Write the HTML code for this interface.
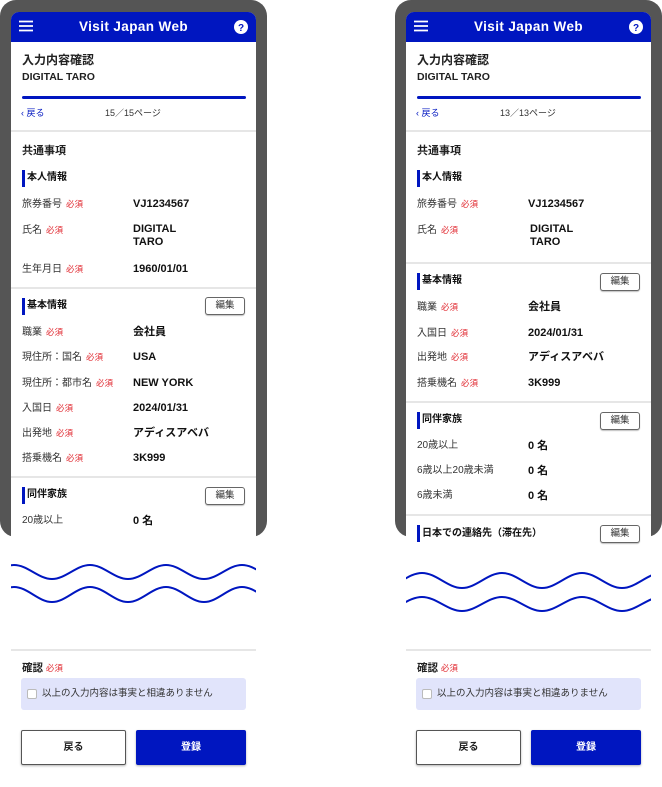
<!DOCTYPE html>
<html><head><meta charset="utf-8"><style>
*{margin:0;padding:0;box-sizing:border-box}
body{width:662px;height:787px;background:#fff;position:relative;overflow:hidden;font-family:"Liberation Sans","Noto Sans CJK JP",sans-serif;color:#222}
.ph{position:absolute;top:0;width:267px;height:787px}
.fr{position:absolute;left:0;top:0;width:267px;height:537px;background:#555;border-radius:16px}
.sc{position:absolute;left:11px;top:12px;width:245px;background:#fff;border-radius:8px 8px 0 0;overflow:hidden}
.hd{position:absolute;left:11px;top:12px;width:245px;height:30px;background:#0016c0;border-radius:8px 8px 0 0;color:#fff;font-weight:bold;font-size:13.5px;text-align:center;line-height:30px;letter-spacing:.4px}
.t{position:absolute;line-height:14px;white-space:nowrap}
.l{font-size:10px;color:#333}
.l i{font-style:normal;color:#e0262d;font-size:8.5px;margin-left:4px}
.v{font-size:11px;font-weight:bold;color:#111}
.s{font-size:10px;font-weight:bold;color:#111;padding-left:5px}
.bar{position:absolute;left:22px;width:3px;height:17px;background:#0016c0}
.dv{position:absolute;left:11px;width:245px;height:2px;background:#e6e6e6}
.eb{position:absolute;left:205px;width:40px;height:18px;border:1px solid #666;border-radius:3px;font-size:9.5px;text-align:center;line-height:16px;color:#333;background:#fff;box-shadow:0 1px 1px rgba(0,0,0,.25)}
.wv{position:absolute;left:11px;top:0}
</style></head><body>

<!-- LEFT PHONE -->
<div class="ph" style="left:0">
<div class="fr"></div>
<div class="sc" style="height:525px"></div>
<div class="hd">Visit Japan Web</div>
<svg style="position:absolute;left:19px;top:20px" width="14" height="12"><path d="M0 1.5H14M0 6H14M0 10.5H14" stroke="#fff" stroke-width="1.8"/></svg>
<svg style="position:absolute;left:234px;top:20px" width="14" height="14"><circle cx="7" cy="7" r="7" fill="#fff"/><text x="7" y="11" font-size="10" font-weight="bold" text-anchor="middle" fill="#0016c0" font-family="Liberation Sans">?</text></svg>
<div class="t" style="left:22px;top:53px;font-size:12px;font-weight:bold">入力内容確認</div>
<div class="t" style="left:22px;top:70px;font-size:10.5px;font-weight:bold">DIGITAL TARO</div>
<div style="position:absolute;left:22px;top:96px;width:224px;height:3px;background:#0016c0;border-radius:2px"></div>
<div class="t" style="left:21px;top:106px;font-size:9px;color:#0016c0">‹ 戻る</div>
<div class="t" style="left:105px;top:106px;font-size:9px;color:#333">15／15ページ</div>
<div class="dv" style="top:130px"></div>
<div class="t" style="left:22px;top:144px;font-size:11px;font-weight:bold">共通事項</div>
<div class="bar" style="top:170px"></div><div class="t s" style="left:22px;top:171px">本人情報</div>
<div class="t l" style="left:22px;top:197px">旅券番号<i>必須</i></div><div class="t v" style="left:133px;top:197px">VJ1234567</div>
<div class="t l" style="left:22px;top:223px">氏名<i>必須</i></div><div class="t v" style="left:133px;top:223px;line-height:13px">DIGITAL<br>TARO</div>
<div class="t l" style="left:22px;top:262px">生年月日<i>必須</i></div><div class="t v" style="left:133px;top:262px">1960/01/01</div>
<div class="dv" style="top:287px"></div>
<div class="bar" style="top:298px"></div><div class="t s" style="left:22px;top:299px">基本情報</div><div class="eb" style="top:297px">編集</div>
<div class="t l" style="left:22px;top:325px">職業<i>必須</i></div><div class="t v" style="left:133px;top:325px">会社員</div>
<div class="t l" style="left:22px;top:350px">現住所：国名<i>必須</i></div><div class="t v" style="left:133px;top:350px">USA</div>
<div class="t l" style="left:22px;top:376px">現住所：都市名<i>必須</i></div><div class="t v" style="left:133px;top:376px">NEW YORK</div>
<div class="t l" style="left:22px;top:401px">入国日<i>必須</i></div><div class="t v" style="left:133px;top:401px">2024/01/31</div>
<div class="t l" style="left:22px;top:426px">出発地<i>必須</i></div><div class="t v" style="left:133px;top:426px">アディスアベバ</div>
<div class="t l" style="left:22px;top:451px">搭乗機名<i>必須</i></div><div class="t v" style="left:133px;top:451px">3K999</div>
<div class="dv" style="top:476px"></div>
<div class="bar" style="top:487px"></div><div class="t s" style="left:22px;top:488px">同伴家族</div><div class="eb" style="top:487px">編集</div>
<div class="t l" style="left:22px;top:514px">20歳以上</div><div class="t v" style="left:133px;top:514px">0 名</div>
<svg class="wv" width="245" height="787"><path d="M-35 579 C-21.3 579 -10.7 565 3 565 S27.3 579 41 579 S65.3 565 79 565 S103.3 579 117 579 S141.3 565 155 565 S179.3 579 193 579 S217.3 565 231 565 S255.3 579 269 579" fill="none" stroke="#0016c0" stroke-width="2"/><path d="M-35 602 C-21.3 602 -10.7 587 3 587 S27.3 602 41 602 S65.3 587 79 587 S103.3 602 117 602 S141.3 587 155 587 S179.3 602 193 602 S217.3 587 231 587 S255.3 602 269 602" fill="none" stroke="#0016c0" stroke-width="2"/></svg>
<div class="dv" style="top:649px"></div>
<div class="t" style="left:22px;top:661px;font-size:10.5px;font-weight:bold">確認 <span style="color:#e0262d;font-size:8.5px;font-weight:normal">必須</span></div>
<div style="position:absolute;left:21px;top:678px;width:225px;height:32px;background:#e1e4fb;border-radius:3px"></div>
<div style="position:absolute;left:27px;top:689px;width:10px;height:10px;background:#fff;border:1px solid #bbb;border-radius:2px"></div>
<div class="t" style="left:42px;top:687px;font-size:9.5px;color:#333">以上の入力内容は事実と相違ありません</div>
<div style="position:absolute;left:21px;top:730px;width:105px;height:35px;border:1px solid #555;border-radius:2px;font-size:10px;font-weight:bold;text-align:center;line-height:33px;box-shadow:0 1px 2px rgba(0,0,0,.3)">戻る</div>
<div style="position:absolute;left:136px;top:730px;width:110px;height:35px;background:#0016c0;border-radius:2px;color:#fff;font-size:10px;font-weight:bold;text-align:center;line-height:35px;box-shadow:0 1px 2px rgba(0,0,0,.3)">登録</div>
</div>

<!-- RIGHT PHONE -->
<div class="ph" style="left:395px">
<div class="fr"></div>
<div class="sc" style="height:533px"></div>
<div class="hd">Visit Japan Web</div>
<svg style="position:absolute;left:19px;top:20px" width="14" height="12"><path d="M0 1.5H14M0 6H14M0 10.5H14" stroke="#fff" stroke-width="1.8"/></svg>
<svg style="position:absolute;left:234px;top:20px" width="14" height="14"><circle cx="7" cy="7" r="7" fill="#fff"/><text x="7" y="11" font-size="10" font-weight="bold" text-anchor="middle" fill="#0016c0" font-family="Liberation Sans">?</text></svg>
<div class="t" style="left:22px;top:53px;font-size:12px;font-weight:bold">入力内容確認</div>
<div class="t" style="left:22px;top:70px;font-size:10.5px;font-weight:bold">DIGITAL TARO</div>
<div style="position:absolute;left:22px;top:96px;width:224px;height:3px;background:#0016c0;border-radius:2px"></div>
<div class="t" style="left:21px;top:106px;font-size:9px;color:#0016c0">‹ 戻る</div>
<div class="t" style="left:105px;top:106px;font-size:9px;color:#333">13／13ページ</div>
<div class="dv" style="top:130px"></div>
<div class="t" style="left:22px;top:144px;font-size:11px;font-weight:bold">共通事項</div>
<div class="bar" style="top:170px"></div><div class="t s" style="left:22px;top:171px">本人情報</div>
<div class="t l" style="left:22px;top:197px">旅券番号<i>必須</i></div><div class="t v" style="left:133px;top:197px">VJ1234567</div>
<div class="t l" style="left:22px;top:223px">氏名<i>必須</i></div><div class="t v" style="left:135px;top:223px;line-height:13px">DIGITAL<br>TARO</div>
<div class="dv" style="top:262px"></div>
<div class="bar" style="top:273px"></div><div class="t s" style="left:22px;top:274px">基本情報</div><div class="eb" style="top:273px">編集</div>
<div class="t l" style="left:22px;top:300px">職業<i>必須</i></div><div class="t v" style="left:133px;top:300px">会社員</div>
<div class="t l" style="left:22px;top:326px">入国日<i>必須</i></div><div class="t v" style="left:133px;top:326px">2024/01/31</div>
<div class="t l" style="left:22px;top:350px">出発地<i>必須</i></div><div class="t v" style="left:133px;top:350px">アディスアベバ</div>
<div class="t l" style="left:22px;top:376px">搭乗機名<i>必須</i></div><div class="t v" style="left:133px;top:376px">3K999</div>
<div class="dv" style="top:401px"></div>
<div class="bar" style="top:412px"></div><div class="t s" style="left:22px;top:413px">同伴家族</div><div class="eb" style="top:412px">編集</div>
<div class="t l" style="left:22px;top:439px">20歳以上</div><div class="t v" style="left:133px;top:439px">0 名</div>
<div class="t l" style="left:22px;top:464px">6歳以上20歳未満</div><div class="t v" style="left:133px;top:464px">0 名</div>
<div class="t l" style="left:22px;top:489px">6歳未満</div><div class="t v" style="left:133px;top:489px">0 名</div>
<div class="dv" style="top:514px"></div>
<div class="bar" style="top:525px"></div><div class="t s" style="left:22px;top:527px">日本での連絡先（滞在先）</div><div class="eb" style="top:525px">編集</div>
<svg class="wv" width="245" height="787"><path d="M-24 588 C-9.6 588 1.6 573 16 573 S41.6 588 56 588 S81.6 573 96 573 S121.6 588 136 588 S161.6 573 176 573 S201.6 588 216 588 S241.6 573 256 573" fill="none" stroke="#0016c0" stroke-width="2"/><path d="M-24 611 C-9.6 611 1.6 597 16 597 S41.6 611 56 611 S81.6 597 96 597 S121.6 611 136 611 S161.6 597 176 597 S201.6 611 216 611 S241.6 597 256 597" fill="none" stroke="#0016c0" stroke-width="2"/></svg>
<div class="dv" style="top:649px"></div>
<div class="t" style="left:22px;top:661px;font-size:10.5px;font-weight:bold">確認 <span style="color:#e0262d;font-size:8.5px;font-weight:normal">必須</span></div>
<div style="position:absolute;left:21px;top:678px;width:225px;height:32px;background:#e1e4fb;border-radius:3px"></div>
<div style="position:absolute;left:27px;top:689px;width:10px;height:10px;background:#fff;border:1px solid #bbb;border-radius:2px"></div>
<div class="t" style="left:42px;top:687px;font-size:9.5px;color:#333">以上の入力内容は事実と相違ありません</div>
<div style="position:absolute;left:21px;top:730px;width:105px;height:35px;border:1px solid #555;border-radius:2px;font-size:10px;font-weight:bold;text-align:center;line-height:33px;box-shadow:0 1px 2px rgba(0,0,0,.3)">戻る</div>
<div style="position:absolute;left:136px;top:730px;width:110px;height:35px;background:#0016c0;border-radius:2px;color:#fff;font-size:10px;font-weight:bold;text-align:center;line-height:35px;box-shadow:0 1px 2px rgba(0,0,0,.3)">登録</div>
</div>
</body></html>
